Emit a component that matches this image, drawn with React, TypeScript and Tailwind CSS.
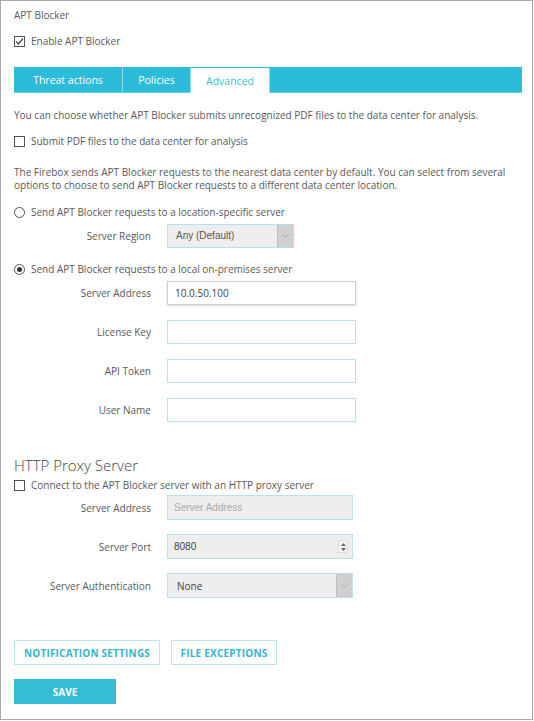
import React from "react"

const font = "font-['Open_Sans','Liberation_Sans',sans-serif]"

function Checkbox({ checked }: { checked?: boolean }) {
  return (
    <span className="w-[11px] h-[11px] border border-[#555] bg-white flex items-center justify-center shrink-0">
      {checked && (
        <svg width="9" height="9" viewBox="0 0 9 9">
          <path d="M1 4.5 L3.5 7 L8 1.5" stroke="#444" strokeWidth="1.2" fill="none" />
        </svg>
      )}
    </span>
  )
}

function Radio({ checked }: { checked?: boolean }) {
  return (
    <span className="w-[11px] h-[11px] rounded-full border border-[#555] bg-white flex items-center justify-center shrink-0">
      {checked && <span className="w-[5px] h-[5px] rounded-full bg-[#333]" />}
    </span>
  )
}

function Row({ label, children, className = "" }: { label: string; children: React.ReactNode; className?: string }) {
  return (
    <div className={`flex items-center ${className}`}>
      <div className="w-[137px] text-right">{label}</div>
      <div className="ml-[16px]">{children}</div>
    </div>
  )
}

function Chevron() {
  return (
    <span className="w-[16px] h-full bg-[#cfcfcf] border-l border-[#bdbdbd] flex items-center justify-center">
      <svg width="7" height="4" viewBox="0 0 7 4">
        <path d="M0.5 0.5 L3.5 3.5 L6.5 0.5" stroke="#999" strokeWidth="0.8" fill="none" />
      </svg>
    </span>
  )
}

export default function App() {
  return (
    <div className={`w-[533px] h-[720px] border border-[#a9a9a9] bg-white text-[10px] leading-[14px] text-[#595959] pl-[13px] pr-[10px] pt-[7px] ${font}`}>
      <div>APT Blocker</div>
      <label className="flex items-center gap-[6px] mt-[12px]">
        <Checkbox checked />
        <span>Enable APT Blocker</span>
      </label>

      {/* tabs */}
      <div className="mt-[19px] h-[26px] bg-[#2abcd8] flex text-[10.5px] border-b border-[#5fd0e4]">
        <div className="w-[109px] flex items-center justify-center text-white border-r border-[#8fdcea]">Threat actions</div>
        <div className="w-[67px] flex items-center justify-center text-white">Policies</div>
        <div className="w-[80px] mt-px flex items-center justify-center bg-white text-[#3cc0d8] border-l border-r border-[#8fdcea] -mb-px">Advanced</div>
      </div>

      <p className="mt-[15px]">You can choose whether APT Blocker submits unrecognized PDF files to the data center for analysis.</p>
      <label className="flex items-center gap-[6px] mt-[12px]">
        <Checkbox />
        <span>Submit PDF files to the data center for analysis</span>
      </label>

      <p className="mt-[18px] leading-[13px] pr-[4px]">
        The Firebox sends APT Blocker requests to the nearest data center by default. You can select from several options to choose to send APT Blocker requests to a different data center location.
      </p>

      <label className="flex items-center gap-[6px] mt-[13px]">
        <Radio />
        <span>Send APT Blocker requests to a location-specific server</span>
      </label>
      <Row label="Server Region" className="mt-[5px]">
        <div className="w-[127px] h-[24px] border border-[#b5e3ec] bg-[#eeeeee] flex items-center justify-between font-['Liberation_Sans',sans-serif]">
          <span className="pl-[8px]">Any (Default)</span>
          <Chevron />
        </div>
      </Row>

      <label className="flex items-center gap-[6px] mt-[14px]">
        <Radio checked />
        <span>Send APT Blocker requests to a local on-premises server</span>
      </label>
      <Row label="Server Address" className="mt-[5px]">
        <div className="w-[189px] h-[24px] border border-[#cfcfcf] shadow-[0_1px_2px_rgba(0,0,0,0.15)] bg-white flex items-center pl-[7px] text-[#444]">10.0.50.100</div>
      </Row>
      <Row label="License Key" className="mt-[15px]">
        <div className="w-[189px] h-[24px] border border-[#b5e3ec] bg-white" />
      </Row>
      <Row label="API Token" className="mt-[15px]">
        <div className="w-[189px] h-[24px] border border-[#b5e3ec] bg-white" />
      </Row>
      <Row label="User Name" className="mt-[15px]">
        <div className="w-[189px] h-[24px] border border-[#b5e3ec] bg-white" />
      </Row>

      <h2 className="mt-[33px] text-[15px] leading-[20px] font-light text-[#444]">HTTP Proxy Server</h2>
      <label className="flex items-center gap-[6px] mt-[3px]">
        <Checkbox />
        <span>Connect to the APT Blocker server with an HTTP proxy server</span>
      </label>
      <Row label="Server Address" className="mt-[3px]">
        <div className="w-[186px] h-[25px] border border-[#b5e3ec] bg-[#eeeeee] flex items-center pl-[6px] text-[#aaa] font-['Liberation_Sans',sans-serif]">Server Address</div>
      </Row>
      <Row label="Server Port" className="mt-[14px]">
        <div className="w-[186px] h-[25px] border border-[#b5e3ec] bg-[#eeeeee] flex items-center justify-between pl-[6px] pr-[4px] text-[#444] font-['Liberation_Sans',sans-serif]">
          <span>8080</span>
          <span className="w-[10px] h-[13px] bg-[#f4f4f4] border border-[#ddd] flex flex-col items-center justify-center gap-[2px]">
            <svg width="5" height="3" viewBox="0 0 5 3"><path d="M0 3 L2.5 0 L5 3 Z" fill="#666" /></svg>
            <svg width="5" height="3" viewBox="0 0 5 3"><path d="M0 0 L2.5 3 L5 0 Z" fill="#666" /></svg>
          </span>
        </div>
      </Row>
      <Row label="Server Authentication" className="mt-[14px]">
        <div className="w-[186px] h-[25px] border border-[#b5e3ec] bg-[#eeeeee] flex items-center justify-between text-[#444]">
          <span className="pl-[9px]">None</span>
          <Chevron />
        </div>
      </Row>

      <div className="flex gap-[11px] mt-[42px]">
        <button className="h-[25px] w-[146px] border border-[#b9e6ef] text-[#33b6cf] font-bold text-[10px] tracking-[0.2px]">NOTIFICATION SETTINGS</button>
        <button className="h-[25px] w-[106px] border border-[#b9e6ef] text-[#33b6cf] font-bold text-[10px] tracking-[0.2px]">FILE EXCEPTIONS</button>
      </div>
      <button className="mt-[14px] h-[25px] w-[102px] bg-[#36bcd6] text-white font-bold text-[10px]">SAVE</button>
    </div>
  )
}
